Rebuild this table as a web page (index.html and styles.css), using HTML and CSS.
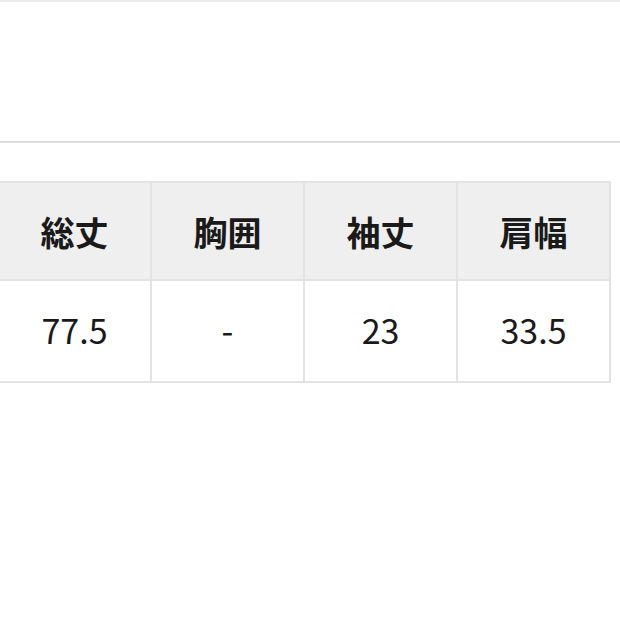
FILE: index.html
```html
<!DOCTYPE html>
<html lang="ja">
<head>
<meta charset="utf-8">
<title>サイズ表</title>
<link rel="stylesheet" href="styles.css">
</head>
<body>
<div class="top-area"></div>
<div class="size-table">
  <div class="cell head">総丈</div>
  <div class="cell head">胸囲</div>
  <div class="cell head">袖丈</div>
  <div class="cell head">肩幅</div>
  <div class="cell body">77.5</div>
  <div class="cell body">-</div>
  <div class="cell body">23</div>
  <div class="cell body">33.5</div>
</div>
</body>
</html>
```
FILE: styles.css
```css
html, body {
  margin: 0;
  padding: 0;
  background: #ffffff;
  width: 620px;
  height: 620px;
  overflow: hidden;
  font-family: "Noto Sans CJK JP", "Noto Sans", sans-serif;
  color: #1a1a1a;
}

.top-area {
  height: 139px;
  border-top: 2px solid #ececec;
  border-bottom: 2px solid #dcdcdc;
}

.size-table {
  margin-top: 38px;
  margin-left: -3px;
  width: 610px;
  display: grid;
  grid-template-columns: repeat(4, 151px);
  grid-template-rows: 96px 100px;
  gap: 2px;
  padding: 2px;
  background: #e3e3e3;
}

.cell {
  display: flex;
  align-items: center;
  justify-content: center;
  font-size: 34px;
  line-height: 1;
  box-sizing: border-box;
}

.head {
  background: #efefef;
  font-weight: 700;
  padding-top: 1px;
}

.body {
  background: #ffffff;
  font-weight: 400;
  padding-bottom: 3px;
}
```
